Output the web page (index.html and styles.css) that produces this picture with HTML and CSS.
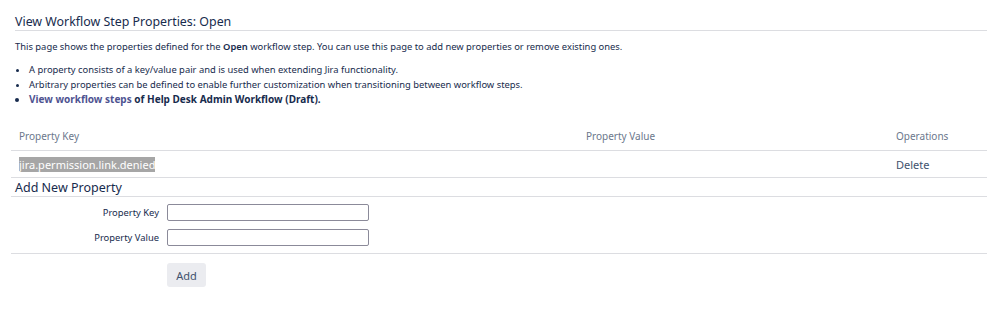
FILE: index.html
```html
<!DOCTYPE html>
<html>
<head>
<meta charset="utf-8">
<link rel="stylesheet" href="styles.css">
</head>
<body>
<div class="page">
  <h2 class="title">View Workflow Step Properties: Open</h2>
  <p class="intro">This page shows the properties defined for the <b>Open</b> workflow step. You can use this page to add new properties or remove existing ones.</p>
  <ul class="notes">
    <li>A property consists of a key/value pair and is used when extending Jira functionality.</li>
    <li>Arbitrary properties can be defined to enable further customization when transitioning between workflow steps.</li>
    <li class="strong"><a href="#">View workflow steps</a> of Help Desk Admin Workflow (Draft).</li>
  </ul>
  <table class="props">
    <thead>
      <tr><th class="c-key">Property Key</th><th class="c-val">Property Value</th><th class="c-ops">Operations</th></tr>
    </thead>
    <tbody>
      <tr><td class="c-key"><span class="sel">jira.permission.link.denied</span></td><td class="c-val"></td><td class="c-ops"><a href="#">Delete</a></td></tr>
    </tbody>
  </table>
  <h3 class="subtitle">Add New Property</h3>
  <form class="form">
    <div class="row"><label class="lbl">Property Key</label><input class="inp" type="text"></div>
    <div class="row"><label class="lbl">Property Value</label><input class="inp" type="text"></div>
    <div class="buttons"><button type="button" class="btn">Add</button></div>
  </form>
</div>
</body>
</html>
```
FILE: styles.css
```css
html, body { margin: 0; padding: 0; background: #fff; }
body { font-family: "Noto Sans", "Open Sans", sans-serif; color: #172b4d; font-size: 9.4px; }
.page { padding: 14px 0 0 11px; }
.title { font-size: 12.4px; font-weight: 400; margin: 0 0 0 4px; padding: 0; border-bottom: 1px solid #dcdde1; line-height: 16px; }
.intro { margin: 9px 0 0 4px; line-height: 14px; }
.intro b { font-weight: 600; }
.notes { margin: 8px 0 0 4px; padding: 0 0 0 14px; line-height: 15px; }
.strong { font-weight: 700; font-size: 10px; }
.strong a { color: #4e5391; text-decoration: none; }
.props { width: 100%; border-collapse: collapse; margin-top: 15px; }
.props th { font-size: 10px; font-weight: 400; color: #6b778c; text-align: left; height: 28px; padding: 0 0 0 8px; border-bottom: 1px solid #dcdde1; }
.props td { height: 26px; padding: 0 0 0 8px; border-bottom: 1px solid #dcdde1; font-size: 11px; }
.c-key { width: 559px; }
.c-val { width: 302px; }
.sel { background: #a6a6a6; color: #fff; }
.props a { color: #42526e; text-decoration: none; }
.subtitle { font-size: 12.5px; font-weight: 400; margin: 0; padding: 1px 0 0 4px; line-height: 17px; border-bottom: 1px solid #dcdde1; }
.form { padding-top: 3px; margin: 0; }
.row { display: flex; align-items: center; height: 25px; }
.lbl { width: 148px; text-align: right; padding-right: 8px; }
.inp { width: 200px; height: 15px; border: 1px solid #8b8a99; border-radius: 2px; padding: 0; margin: 0; }
.buttons { border-top: 1px solid #dcdde1; margin-top: 3px; padding: 9px 0 0 156px; }
.btn { font-family: inherit; font-size: 11px; color: #42526e; background: #ebecf0; border: 0; border-radius: 3px; width: 39px; height: 24px; padding: 0; }
```
